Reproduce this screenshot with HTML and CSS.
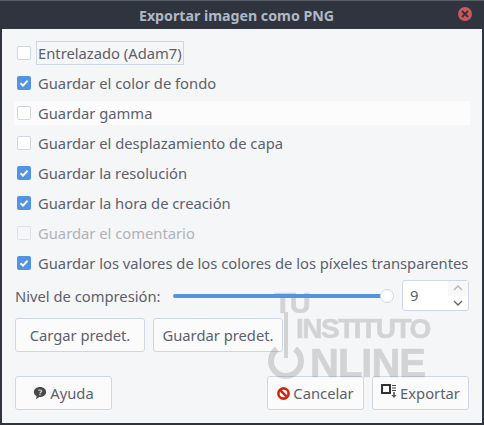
FILE: index.html
```html
<!DOCTYPE html>
<html lang="es">
<head>
    <meta charset="UTF-8">
    <meta name="viewport" content="width=device-width, initial-scale=1.0">
    <title>Exportar imagen como PNG</title>
    <link rel="stylesheet" href="styles.css">
</head>
<body>
    <div class="window">
        <header class="titlebar">
            <span class="title">Exportar imagen como PNG</span>
            <span class="close">
                <svg width="8" height="8" viewBox="0 0 8 8"><path d="M1 1L7 7M7 1L1 7" stroke="#2f343f" stroke-width="1.8" fill="none"/></svg>
            </span>
        </header>
        <main class="content">
            <div class="options">
                <label class="option"><span class="check"></span><span class="text focused">Entrelazado (Adam7)</span></label>
                <label class="option"><span class="check on"><svg width="14" height="14" viewBox="0 0 14 14"><path d="M3.5 7.2L6 9.6L10.5 4.8" stroke="#fff" stroke-width="2" fill="none"/></svg></span><span class="text">Guardar el color de fondo</span></label>
                <label class="option hover"><span class="check"></span><span class="text">Guardar gamma</span></label>
                <label class="option"><span class="check"></span><span class="text">Guardar el desplazamiento de capa</span></label>
                <label class="option"><span class="check on"><svg width="14" height="14" viewBox="0 0 14 14"><path d="M3.5 7.2L6 9.6L10.5 4.8" stroke="#fff" stroke-width="2" fill="none"/></svg></span><span class="text">Guardar la resolución</span></label>
                <label class="option"><span class="check on"><svg width="14" height="14" viewBox="0 0 14 14"><path d="M3.5 7.2L6 9.6L10.5 4.8" stroke="#fff" stroke-width="2" fill="none"/></svg></span><span class="text">Guardar la hora de creación</span></label>
                <label class="option disabled"><span class="check"></span><span class="text">Guardar el comentario</span></label>
                <label class="option"><span class="check on"><svg width="14" height="14" viewBox="0 0 14 14"><path d="M3.5 7.2L6 9.6L10.5 4.8" stroke="#fff" stroke-width="2" fill="none"/></svg></span><span class="text">Guardar los valores de los colores de los píxeles transparentes</span></label>
            </div>
            <div class="compression">
                <span class="comp-label">Nivel de compresión:</span>
                <div class="slider"><div class="track"></div><div class="knob"></div></div>
                <div class="spin">
                    <span class="spin-value">9</span>
                    <div class="spin-arrows">
                        <span class="arrow up"><svg width="10" height="6" viewBox="0 0 10 6"><path d="M1 5L5 1L9 5" stroke="#b4b7bd" stroke-width="1.3" fill="none"/></svg></span>
                        <span class="arrow"><svg width="10" height="6" viewBox="0 0 10 6"><path d="M1 1L5 5L9 1" stroke="#5c616c" stroke-width="1.3" fill="none"/></svg></span>
                    </div>
                </div>
            </div>
            <div class="defaults">
                <button class="btn wide">Cargar predet.</button>
                <button class="btn wide">Guardar predet.</button>
            </div>
            <div class="actions">
                <button class="btn action">
                    <svg width="14" height="14" viewBox="0 0 16 16"><path d="M8 1C4 1 1 3.500 1 6.800C1 9 2.400 10.700 4.200 11.500L3.400 15L7.200 12.600C11.600 12.800 15 10.200 15 6.800C15 3.500 12 1 8 1Z" fill="#484848"/><path d="M6.200 5.400C6.400 4.300 9.800 4.100 9.800 6C9.800 7.300 8 7.200 8 8.500" stroke="#ddd" stroke-width="1.400" fill="none"/><rect x="7.300" y="9.200" width="1.400" height="1.400" fill="#ddd"/></svg>
                    <span>Ayuda</span>
                </button>
                <div class="actions-right">
                    <button class="btn action">
                        <svg width="13" height="13" viewBox="0 0 14 14"><circle cx="7" cy="7" r="5.500" stroke="#cc2a0e" stroke-width="2.800" fill="#fff"/><path d="M3.400 3.400L10.600 10.600" stroke="#cc2a0e" stroke-width="2.800"/></svg>
                        <span>Cancelar</span>
                    </button>
                    <button class="btn action">
                        <svg class="export-icon" width="16" height="15" viewBox="0 0 16 15"><rect x="1" y="1" width="8" height="8" stroke="#333" stroke-width="2" fill="#fff"/><path d="M11 1.500h4M11 4h4M11 6.500h4" stroke="#444" stroke-width="1.200"/><path d="M13 8V12" stroke="#555" stroke-width="1.600"/><path d="M10.500 11h5L13 14Z" fill="#555"/></svg>
                        <span>Exportar</span>
                    </button>
                </div>
            </div>
        </main>
        <div class="watermark">
            <svg class="wm-power" width="44" height="80" viewBox="0 0 44 80"><path d="M13 38A15 15 0 1 0 31 38" stroke="#7d7d7d" stroke-width="6" fill="none"/><path d="M22 1V47" stroke="#7d7d7d" stroke-width="4"/></svg>
            <span class="wm-tu">TU</span>
            <span class="wm-inst">INSTITUTO</span>
            <span class="wm-online">NLINE</span>
        </div>
    </div>
</body>
</html>
```
FILE: styles.css
```css
* {
    margin: 0;
    padding: 0;
    box-sizing: border-box;
}
html, body {
    width: 484px;
    height: 425px;
    overflow: hidden;
    background-color: #2f343f;
}
body {
    font-family: "Noto Sans", sans-serif;
    font-size: 14.75px;
    color: #5c616c;
}
.window {
    position: relative;
    width: 484px;
    height: 425px;
    display: flex;
    flex-direction: column;
    border-top: 1px solid #5a5f6a;
}
.titlebar {
    height: 28px;
    flex: none;
    display: flex;
    align-items: center;
    justify-content: center;
    padding-right: 11px;
    position: relative;
}
.title {
    font-size: 14.2px;
    font-weight: bold;
    color: #afb8c5;
    margin-top: 1px;
}
.close {
    position: absolute;
    right: 12px;
    top: 6px;
    width: 14px;
    height: 14px;
    border-radius: 50%;
    background-color: #cc575d;
    display: flex;
    align-items: center;
    justify-content: center;
}
.content {
    flex: 1;
    margin: 0 2px 2px 2px;
    background-color: #f5f6f7;
    padding: 12px 13px 12px 13px;
    display: flex;
    flex-direction: column;
}
.options {
    display: flex;
    flex-direction: column;
    gap: 6px;
}
.option {
    height: 24px;
    display: flex;
    align-items: center;
    padding-left: 3px;
    margin-left: -1px;
    margin-right: -1px;
    gap: 5px;
    white-space: nowrap;
}
.option.hover {
    background-color: #fcfcfd;
}
.check {
    width: 14px;
    height: 14px;
    flex: none;
    background-color: #fff;
    border: 1px solid #cfd6e6;
    border-radius: 2px;
    position: relative;
}
.check.on {
    background-color: #5294e2;
    border: none;
}
.check svg {
    display: block;
}
.text {
    padding: 0 1px;
    border: 1px solid transparent;
    line-height: 22px;
}
.text.focused {
    border-color: #cfd6e6;
}
.option.disabled .text {
    color: #b0b3b8;
}
.option.disabled .check {
    background-color: #f5f6f7;
    border-color: #dfe1e6;
}
.compression {
    display: flex;
    align-items: center;
    margin-top: 5px;
    height: 31px;
}
.comp-label {
    width: 158px;
    flex: none;
}
.slider {
    position: relative;
    z-index: 1;
    width: 221px;
    height: 14px;
    flex: none;
}
.track {
    position: absolute;
    left: 0;
    right: 7px;
    top: 5px;
    height: 4px;
    border-radius: 2px;
    background-color: #5294e2;
}
.knob {
    position: absolute;
    right: 0;
    top: 0;
    width: 14px;
    height: 14px;
    border-radius: 50%;
    background-color: #fff;
    border: 1px solid #cfd6e6;
}
.spin {
    width: 67px;
    height: 31px;
    margin-left: 8px;
    flex: none;
    background-color: #fff;
    border: 1px solid #cfd6e6;
    border-radius: 3px;
    display: flex;
    justify-content: space-between;
}
.spin-value {
    padding-left: 7px;
    line-height: 29px;
}
.spin-arrows {
    width: 20px;
    display: flex;
    flex-direction: column;
}
.arrow {
    height: 15px;
    display: flex;
    align-items: center;
    justify-content: center;
}
.arrow.up {
    background-color: #f8f8f9;
}
.defaults {
    display: flex;
    gap: 8px;
    margin-top: 7px;
}
.btn {
    height: 34px;
    font-family: inherit;
    font-size: 14.75px;
    color: #5c616c;
    background-color: #fbfbfc;
    border: 1px solid #cfd6e6;
    border-radius: 3px;
    display: flex;
    align-items: center;
    justify-content: center;
    white-space: nowrap;
}
.btn.wide {
    width: 130px;
}
.btn.action {
    width: 97px;
    gap: 3px;
}
.export-icon {
    margin-top: -3px;
}
.actions {
    display: flex;
    justify-content: space-between;
    margin-top: 24px;
}
.actions-right {
    display: flex;
    gap: 8px;
}
/* marca de agua encima del dialogo */
.watermark {
    position: absolute;
    left: 260px;
    top: 280px;
    width: 180px;
    height: 100px;
    opacity: 0.28;
    color: #7d7d7d;
    font-family: "Liberation Sans", sans-serif;
    font-weight: bold;
    -webkit-text-stroke: 0.7px #7d7d7d;
    filter: blur(0.4px);
    pointer-events: none;
}
.watermark span {
    position: absolute;
    line-height: 0.7;
    white-space: nowrap;
}
.wm-power {
    position: absolute;
    left: 4px;
    top: 30px;
}
.wm-tu {
    left: 14px;
    top: 12px;
    font-size: 29px;
    letter-spacing: -2px;
}
.wm-inst {
    left: 36px;
    top: 38px;
    font-size: 28px;
    letter-spacing: -1.5px;
}
.wm-online {
    left: 50px;
    top: 68px;
    font-size: 40px;
    letter-spacing: -1px;
}
```
